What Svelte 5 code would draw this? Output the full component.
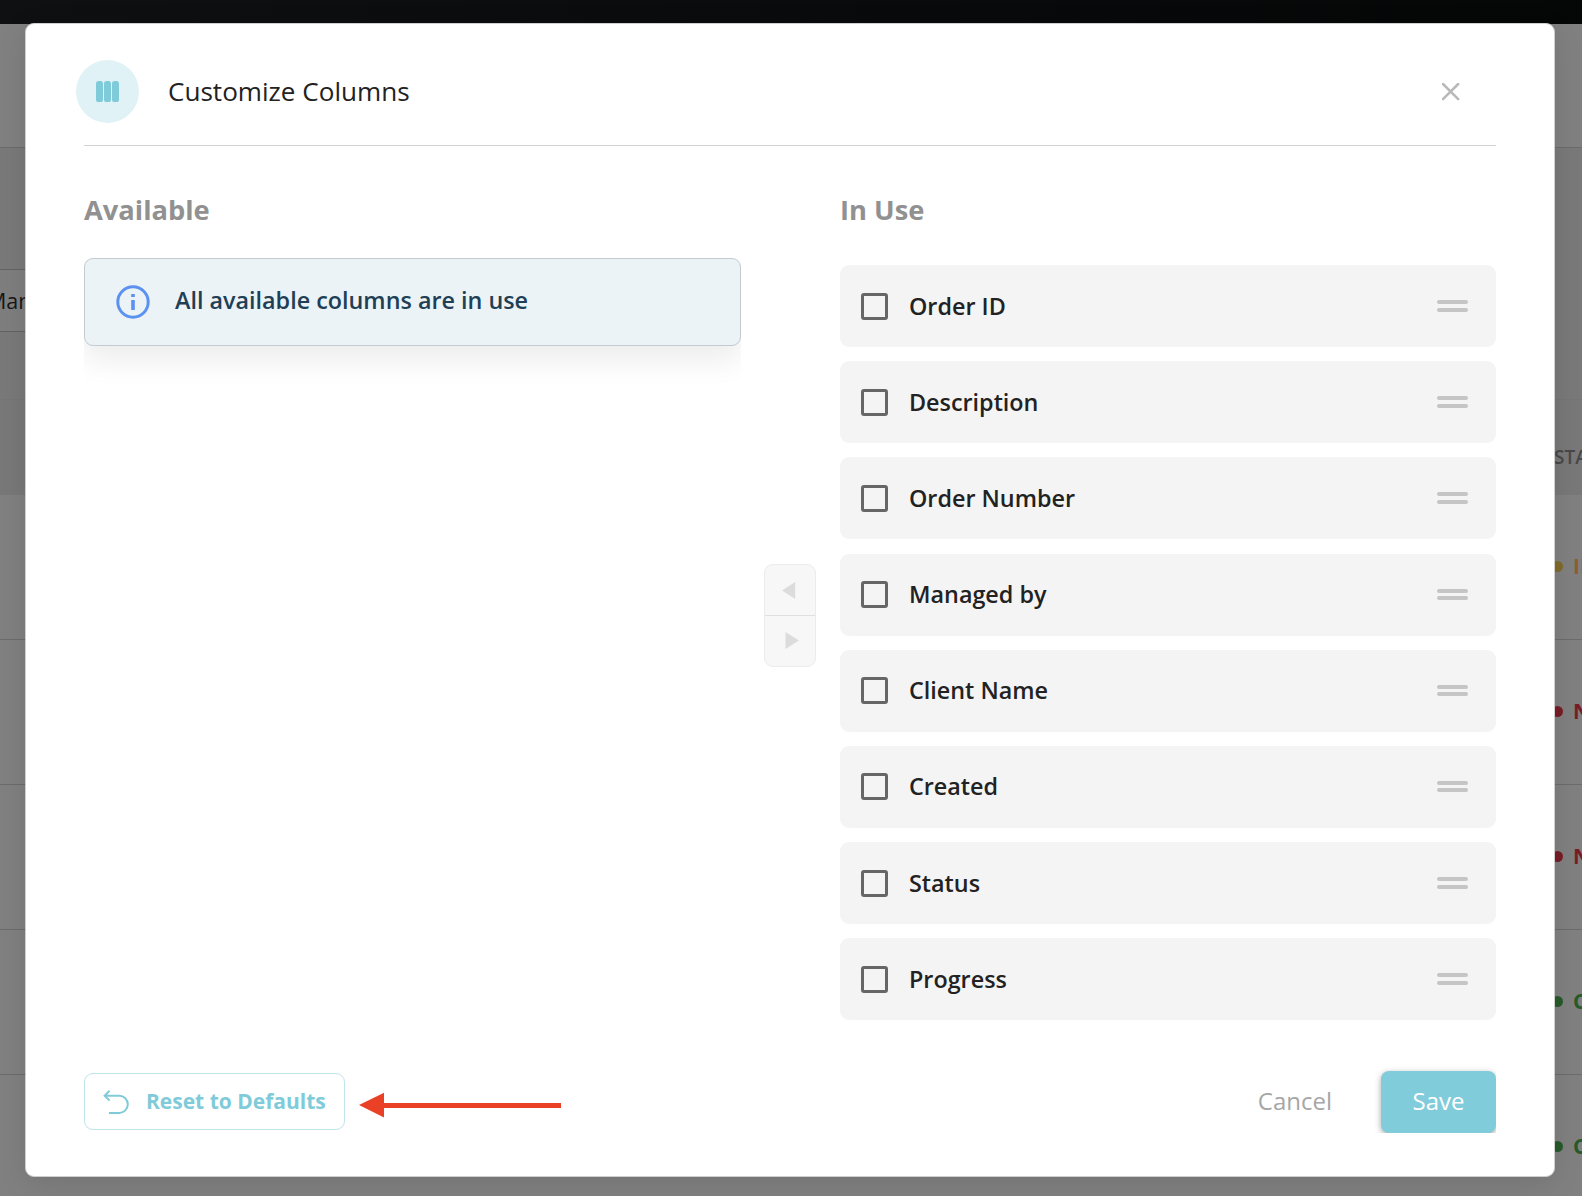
<script>
  const columns = ['Order ID', 'Description', 'Order Number', 'Managed by', 'Client Name', 'Created', 'Status', 'Progress'];
  const rows = [
    { label: 'IN PROGRESS', tone: 'amber' },
    { label: 'NEW', tone: 'red' },
    { label: 'NEW', tone: 'red' },
    { label: 'COMPLETED', tone: 'green' },
    { label: 'COMPLETED', tone: 'green' }
  ];
</script>

<div class="page">
  <div class="topbar"></div>
  <div class="subheader"></div>
  <div class="filters"><div class="select">Managed by</div></div>
  <div class="thead">STATUS</div>
  {#each rows as row}
    <div class="trow {row.tone}"><span class="dot"></span>{row.label}</div>
  {/each}

  <section class="modal">
    <header>
      <div class="badge">
        <svg width="23" height="21" viewBox="0 0 23 21" fill="#80cbd9">
          <rect x="0" y="0" width="7" height="21" rx="2.6" />
          <rect x="8" y="0" width="7" height="21" rx="2.6" />
          <rect x="16" y="0" width="7" height="21" rx="2.6" />
        </svg>
      </div>
      <h1>Customize Columns</h1>
      <svg class="close" width="18" height="18" viewBox="0 0 18 18" fill="none" stroke="#b9b9b9" stroke-width="2.5" stroke-linecap="round">
        <path d="M1 1 16.2 16.2M16.2 1 1 16.2" />
      </svg>
    </header>

    <div class="body">
      <div class="pane">
        <h2>Available</h2>
        <div class="clip">
          <div class="info">
            <svg width="34" height="34" viewBox="0 0 34 34">
              <circle cx="17" cy="17" r="15.2" fill="none" stroke="#5b92f2" stroke-width="3" />
              <rect x="15.2" y="9" width="3.6" height="3" fill="#5b92f2" />
              <rect x="15.2" y="15" width="3.6" height="10" fill="#5b92f2" />
            </svg>
            <span class="t-info">All available columns are in use</span>
          </div>
        </div>
      </div>

      <div class="mover">
        <div class="half"><svg width="14" height="17" viewBox="0 0 14 17"><path d="M13.2 0V17L0 8.5Z" fill="#dcdcdc" /></svg></div>
        <div class="half next"><svg width="14" height="17" viewBox="0 0 14 17"><path d="M.5 0V17L14 8.5Z" fill="#dcdcdc" /></svg></div>
      </div>

      <div class="pane">
        <h2>In Use</h2>
        <ul>
          {#each columns as name}
            <li>
              <span class="box"></span>
              <span class="name">{name}</span>
              <span class="grip"></span>
            </li>
          {/each}
        </ul>
      </div>
    </div>

    <footer>
      <button class="reset">
        <svg width="26" height="25" viewBox="0 0 26 25" fill="none" stroke="#80cbd9" stroke-width="2">
          <path d="M1.5 5.7H16.2A8.6 8.6 0 0 1 16.2 22.9H6M6.6 .8 1.6 5.7 6.6 10.6" />
        </svg>
        <span class="t-reset">Reset to Defaults</span>
      </button>
      <svg class="pointer" width="202" height="26" viewBox="0 0 202 26" fill="#ea4126">
        <path d="M0 13 25 .7V11H202V16H25V25.6Z" />
      </svg>
      <span class="cancel">Cancel</span>
      <div class="saveclip"><button class="save">Save</button></div>
    </footer>
  </section>
</div>

<style>
  :global(body) { margin: 0; overflow: hidden; }
  .page {
    position: relative;
    width: 1582px;
    height: 1196px;
    overflow: hidden;
    background: #808080;
    font-family: 'Open Sans', 'Noto Sans', sans-serif;
  }
  .page * { box-sizing: border-box; }
  .topbar { height: 24px; background: linear-gradient(90deg, #0f1012, #050606); }
  .subheader { height: 124px; border-bottom: 1px solid #6b6b6b; }
  .filters { height: 251px; padding-top: 121px; background: #797979; }
  .select {
    width: 300px;
    height: 63px;
    margin-left: -40px;
    padding-left: 26px;
    border: 1px solid #626262;
    background: #7e7e7e;
    color: #161616;
    font-size: 21.5px;
    line-height: 61px;
  }
  .thead {
    height: 96px;
    padding-left: 1554px;
    border-top: 1px solid #757575;
    background: #787878;
    color: #484848;
    font-size: 19px;
    font-weight: 600;
    line-height: 115px;
  }
  .trow {
    display: flex;
    align-items: center;
    height: 145px;
    padding: 0 0 2px 1552px;
    border-bottom: 1px solid #6b6b6b;
    font-size: 21px;
    font-weight: 700;
    white-space: nowrap;
  }
  .dot { width: 11px; height: 11px; margin-right: 10px; border-radius: 50%; background: currentColor; flex: none; }
  .amber { color: #8c5f2e; }
  .amber .dot { background: #806a29; }
  .red { color: #781d27; }
  .green { color: #275a29; }

  .modal {
    position: absolute;
    left: 25px;
    top: 23px;
    width: 1530px;
    height: 1154px;
    padding: 36px 58px 0 58px;
    border: 1px solid #cfcfcf;
    border-radius: 9px;
    background: #fff;
    box-shadow: 0 6px 28px rgba(0, 0, 0, 0.1);
  }
  header {
    display: flex;
    align-items: center;
    height: 86px;
    padding-bottom: 22px;
    border-bottom: 1px solid #d2d2d2;
  }
  .badge {
    display: grid;
    place-items: center;
    flex: none;
    width: 63px;
    height: 63px;
    margin-left: -8px;
    border-radius: 50%;
    background: #e0f2f6;
  }
  h1, h2 { margin: 0; }
  h1 { margin: -2px 0 0 29px; color: #222; font-size: 26.1px; font-weight: 400; line-height: 40px; }
  .close { margin: 0 36px 0 auto; }
  .body { display: flex; height: 925px; }
  .pane { flex: none; width: 657px; }
  .pane:last-child { width: 656px; }
  h2 { height: 112px; padding-top: 44px; color: #919191; font-size: 27.3px; font-weight: 700; line-height: 40px; }
  .clip { height: 160px; overflow: hidden; }
  .info {
    display: flex;
    align-items: center;
    height: 88px;
    padding-left: 31px;
    border: 1px solid #c3cbd0;
    border-radius: 9px;
    background: #ebf3f7;
    box-shadow: 0 14px 30px rgba(0, 0, 0, 0.08);
  }
  .t-info { margin: -4px 0 0 25px; color: #213f54; font-size: 23.35px; font-weight: 600; }
  .mover {
    width: 52px;
    height: 103px;
    margin: 418px 24px 0 23px;
    border: 1px solid #ececec;
    border-radius: 9px;
    background: #f7f7f7;
  }
  .half { display: grid; place-items: center; height: 50px; padding-right: 2px; }
  .next { height: 50px; padding: 0 0 0 4px; border-top: 1px solid #e0e0e0; }
  ul { display: grid; gap: 14.2px; margin: 7px 0 0; padding: 0; list-style: none; }
  li { display: flex; align-items: center; height: 82px; padding: 0 28px 0 21px; border-radius: 9px; background: #f4f4f4; }
  .box { width: 27px; height: 27px; border: 3px solid #666; border-radius: 3px; }
  .name { margin: -1px 0 0 21px; color: #222; font-size: 23.35px; font-weight: 600; }
  .grip { width: 31px; height: 12px; margin: 0 0 0 auto; }
  .grip::before, .grip::after { content: ''; display: block; height: 4px; border-radius: 2px; background: #c5c5c5; }
  .grip::before { margin-bottom: 3.5px; }
  footer { display: flex; height: 63px; }
  button { font-family: inherit; }
  .reset {
    display: flex;
    align-items: center;
    width: 261px;
    height: 57px;
    margin-top: 2px;
    padding: 0 0 0 18px;
    border: 1px solid #bfe5ec;
    border-radius: 9px;
    background: #fff;
    color: #80cbd9;
    font-size: 21px;
    font-weight: 700;
  }
  .reset svg { margin-top: 1px; }
  .t-reset { margin: -1px 0 0 17px; white-space: nowrap; }
  .pointer { margin: 21px 0 0 14px; }
  .cancel { margin-left: auto; color: #a6a6a6; font-size: 24px; line-height: 60px; }
  .saveclip { width: 139px; height: 82px; margin: -20px 0 0 25px; padding: 20px 0 0 24px; overflow: hidden; }
  .save {
    width: 115px;
    height: 62px;
    padding: 0 0 3px;
    border: 0;
    border-radius: 8px;
    background: #81ccda;
    color: #fff;
    font-size: 24px;
    box-shadow: 0 2px 6px rgba(0, 0, 0, 0.35);
  }
</style>
